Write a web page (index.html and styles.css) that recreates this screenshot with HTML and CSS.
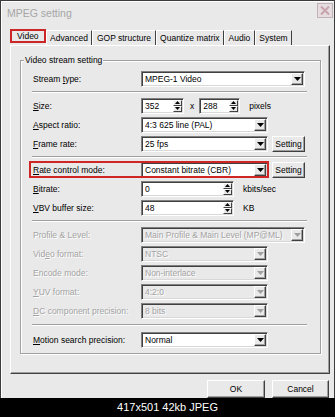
FILE: index.html
```html
<!DOCTYPE html>
<html>
<head>
<meta charset="utf-8">
<title>MPEG setting</title>
<link rel="stylesheet" href="styles.css">
</head>
<body>
<div class="win">
  <div class="titlebar">
    <span class="title">MPEG setting</span>
    <span class="close"><svg width="16" height="15" viewBox="0 0 16 15"><rect x="0.5" y="0.5" width="15" height="14" fill="#e6dde0" stroke="#c2b3b8"/><path d="M4 3.5 L12 11.5 M12 3.5 L4 11.5" stroke="#c8a3ae" stroke-width="2"/></svg></span>
  </div>
  <div class="tabs">
    <span class="tab sel">Video</span>
    <span class="tab">Advanced</span>
    <span class="tab">GOP structure</span>
    <span class="tab">Quantize matrix</span>
    <span class="tab">Audio</span>
    <span class="tab">System</span>
  </div>
  <div class="panel">
    <fieldset class="group">
      <legend>Video stream setting</legend>

      <div class="row">
        <span class="lbl">Stream <u>t</u>ype:</span>
        <span class="combo wide"><span class="val">MPEG-1 Video</span><span class="drop"><svg width="7" height="4" viewBox="0 0 7 4"><path d="M0 0h7L3.5 4z"/></svg></span></span>
      </div>
      <div class="sep"></div>

      <div class="row">
        <span class="lbl"><u>S</u>ize:</span>
        <span class="spinbox w43"><span class="val">352</span><span class="spinbtn"><span><svg width="5" height="3" viewBox="0 0 5 3"><path d="M0 3h5L2.5 0z"/></svg></span><span><svg width="5" height="3" viewBox="0 0 5 3"><path d="M0 0h5L2.5 3z"/></svg></span></span></span>
        <span class="times">x</span>
        <span class="spinbox w41"><span class="val">288</span><span class="spinbtn"><span><svg width="5" height="3" viewBox="0 0 5 3"><path d="M0 3h5L2.5 0z"/></svg></span><span><svg width="5" height="3" viewBox="0 0 5 3"><path d="M0 0h5L2.5 3z"/></svg></span></span></span>
        <span class="unit">pixels</span>
      </div>

      <div class="row">
        <span class="lbl"><u>A</u>spect ratio:</span>
        <span class="combo short"><span class="val">4:3 625 line (PAL)</span><span class="drop"><svg width="7" height="4" viewBox="0 0 7 4"><path d="M0 0h7L3.5 4z"/></svg></span></span>
      </div>

      <div class="row">
        <span class="lbl"><u>F</u>rame rate:</span>
        <span class="combo short"><span class="val">25 fps</span><span class="drop"><svg width="7" height="4" viewBox="0 0 7 4"><path d="M0 0h7L3.5 4z"/></svg></span></span>
        <button class="btn set">Setting</button>
      </div>
      <div class="sep s7"></div>

      <div class="row">
        <span class="hl">
          <span class="lbl"><u>R</u>ate control mode:</span>
          <span class="combo short"><span class="val">Constant bitrate (CBR)</span><span class="drop"><svg width="7" height="4" viewBox="0 0 7 4"><path d="M0 0h7L3.5 4z"/></svg></span></span>
        </span>
        <button class="btn set">Setting</button>
      </div>

      <div class="row">
        <span class="lbl"><u>B</u>itrate:</span>
        <span class="spinbox w93"><span class="val">0</span><span class="spinbtn"><span><svg width="5" height="3" viewBox="0 0 5 3"><path d="M0 3h5L2.5 0z"/></svg></span><span><svg width="5" height="3" viewBox="0 0 5 3"><path d="M0 0h5L2.5 3z"/></svg></span></span></span>
        <span class="unit">kbits/sec</span>
      </div>

      <div class="row">
        <span class="lbl"><u>V</u>BV buffer size:</span>
        <span class="spinbox w93"><span class="val">48</span><span class="spinbtn"><span><svg width="5" height="3" viewBox="0 0 5 3"><path d="M0 3h5L2.5 0z"/></svg></span><span><svg width="5" height="3" viewBox="0 0 5 3"><path d="M0 0h5L2.5 3z"/></svg></span></span></span>
        <span class="unit">KB</span>
      </div>
      <div class="sep"></div>

      <div class="row dis">
        <span class="lbl">Profile &amp; Level:</span>
        <span class="combo wide"><span class="val">Main Profile &amp; Main Level (MP@ML)</span><span class="drop"><svg width="7" height="4" viewBox="0 0 7 4"><path d="M0 0h7L3.5 4z"/></svg></span></span>
      </div>

      <div class="row dis">
        <span class="lbl">Vid<u>e</u>o format:</span>
        <span class="combo short"><span class="val">NTSC</span><span class="drop"><svg width="7" height="4" viewBox="0 0 7 4"><path d="M0 0h7L3.5 4z"/></svg></span></span>
      </div>

      <div class="row dis">
        <span class="lbl">Encode mode:</span>
        <span class="combo short"><span class="val">Non-interlace</span><span class="drop"><svg width="7" height="4" viewBox="0 0 7 4"><path d="M0 0h7L3.5 4z"/></svg></span></span>
      </div>

      <div class="row dis">
        <span class="lbl"><u>Y</u>UV format:</span>
        <span class="combo short"><span class="val">4:2:0</span><span class="drop"><svg width="7" height="4" viewBox="0 0 7 4"><path d="M0 0h7L3.5 4z"/></svg></span></span>
      </div>

      <div class="row dis">
        <span class="lbl"><u>D</u>C component precision:</span>
        <span class="combo short"><span class="val">8 bits</span><span class="drop"><svg width="7" height="4" viewBox="0 0 7 4"><path d="M0 0h7L3.5 4z"/></svg></span></span>
      </div>
      <div class="sep s10"></div>

      <div class="row">
        <span class="lbl"><u>M</u>otion search precision:</span>
        <span class="combo short"><span class="val">Normal</span><span class="drop"><svg width="7" height="4" viewBox="0 0 7 4"><path d="M0 0h7L3.5 4z"/></svg></span></span>
      </div>
    </fieldset>
  </div>
  <div class="buttons">
    <button class="btn big">OK</button>
    <button class="btn big">Cancel</button>
  </div>
</div>
<div class="caption">417x501 42kb JPEG</div>
</body>
</html>
```

FILE: styles.css
```css
* { box-sizing: border-box; }
html, body { margin: 0; padding: 0; }
body {
  width: 335px;
  height: 417px;
  overflow: hidden;
  background: #000;
  font-family: "Liberation Sans", Arial, sans-serif;
  font-size: 8.5px;
  color: #000;
}
.win {
  height: 398px;
  background: #e9e9e9;
  border: 1px solid #3c3c3c;
  border-bottom: 0;
  box-shadow: inset 1px 1px 0 #fff;
  display: flex;
  flex-direction: column;
  overflow: hidden;
}
.titlebar {
  height: 27px;
  flex: none;
  display: flex;
  justify-content: space-between;
  align-items: flex-start;
  padding: 1px 1px 0 6px;
}
.title {
  margin-top: 5px;
  font-size: 10.5px;
  line-height: 13px;
  color: #a6a6a6;
}
.close { margin-top: 1px; line-height: 0; }

.tabs {
  height: 17px;
  flex: none;
  display: flex;
  align-items: flex-end;
  padding-left: 9px;
}
.tab {
  height: 15px;
  line-height: 14px;
  padding: 0 3.5px;
  border-top: 1px solid #fff;
  border-left: 1px solid #fff;
  border-right: 1px solid #404040;
  white-space: nowrap;
}
.tab.sel {
  height: 14px;
  line-height: 10px;
  margin-bottom: 2px;
  padding: 0 5px;
  border: 2px solid #cc2626;
}

.panel {
  height: 329px;
  flex: none;
  margin: 0 4px 0 9px;
  border: 1px solid;
  border-color: #fff #404040 #404040 #fff;
  box-shadow: inset -1px -1px 0 #a0a0a0;
  padding: 9px 8px 0 9px;
}
.group {
  margin: 0;
  min-width: 0;
  padding: 4px 13px 4px 12px;
  border: 1px solid #a0a0a0;
  box-shadow: inset 1px 1px 0 #fff, 1px 1px 0 #fff;
}
.group legend {
  margin-left: -9px;
  padding: 0 1px;
  line-height: 10px;
  background: #e9e9e9;
}

.row {
  display: flex;
  align-items: center;
  height: 19px;
}
.lbl {
  width: 108px;
  flex: none;
  white-space: nowrap;
}
.combo, .spinbox {
  display: flex;
  align-items: center;
  height: 16px;
  flex: none;
  background: #fff;
  border: 1px solid;
  border-color: #808080 #fff #fff #808080;
  box-shadow: inset 1px 1px 0 #404040, inset -1px -1px 0 #d8d8d8;
  padding: 0 1px 0 3px;
  white-space: nowrap;
}
.combo.wide { width: 164px; }
.combo.short { width: 127px; }
.val { flex: 1; overflow: hidden; }
.drop {
  width: 12px;
  height: 12px;
  flex: none;
  display: flex;
  align-items: center;
  justify-content: center;
  background: #e9e9e9;
  border: 1px solid;
  border-color: #fff #404040 #404040 #fff;
  box-shadow: inset -1px -1px 0 #a0a0a0;
}
.drop svg path { fill: #000; }

.spinbox.w43 { width: 43px; }
.spinbox.w41 { width: 41px; }
.spinbox.w93 { width: 93px; }
.spinbtn {
  width: 9px;
  height: 12px;
  flex: none;
  display: flex;
  flex-direction: column;
}
.spinbtn span {
  flex: 1;
  display: flex;
  align-items: center;
  justify-content: center;
  background: #e9e9e9;
  border: 1px solid;
  border-color: #fff #404040 #404040 #fff;
}
.spinbtn svg path { fill: #000; }
.times { margin: 0 5px 0 6px; }
.unit { margin-left: 9px; }

.btn {
  font: inherit;
  color: #000;
  background: #e9e9e9;
  border: 1px solid;
  border-color: #fff #404040 #404040 #fff;
  box-shadow: inset -1px -1px 0 #a0a0a0;
  padding: 0;
  margin: 0;
}
.btn.set {
  width: 33px;
  height: 16px;
  margin-left: 4px;
}

.hl {
  position: relative;
  display: flex;
  align-items: center;
  height: 17px;
}
.hl::after {
  content: "";
  position: absolute;
  left: -4px;
  right: -1px;
  top: 0;
  bottom: 0;
  border: 2px solid #cf2525;
}

.sep {
  height: 2px;
  border-top: 1px solid #a0a0a0;
  border-bottom: 1px solid #fff;
  margin: 3px 0 3px -1px;
}
.sep.s7 { margin: 3px 0 2px -1px; }
.sep.s10 { margin: 4px 0 4px -1px; }

.row.dis .lbl,
.row.dis .val {
  color: #a3a3a3;
  text-shadow: 1px 1px 0 #fff;
}
.row.dis .combo { background: #e9e9e9; }
.row.dis .drop svg path { fill: #a0a0a0; }

.buttons {
  display: flex;
  justify-content: flex-end;
  gap: 7px;
  padding: 6px 5px 0 0;
}
.btn.big { height: 18px; }
.btn.big:first-child { width: 58px; }
.btn.big:last-child { width: 57px; }

.caption {
  height: 19px;
  line-height: 19px;
  text-align: center;
  color: #fff;
  font-size: 11px;
}
```
